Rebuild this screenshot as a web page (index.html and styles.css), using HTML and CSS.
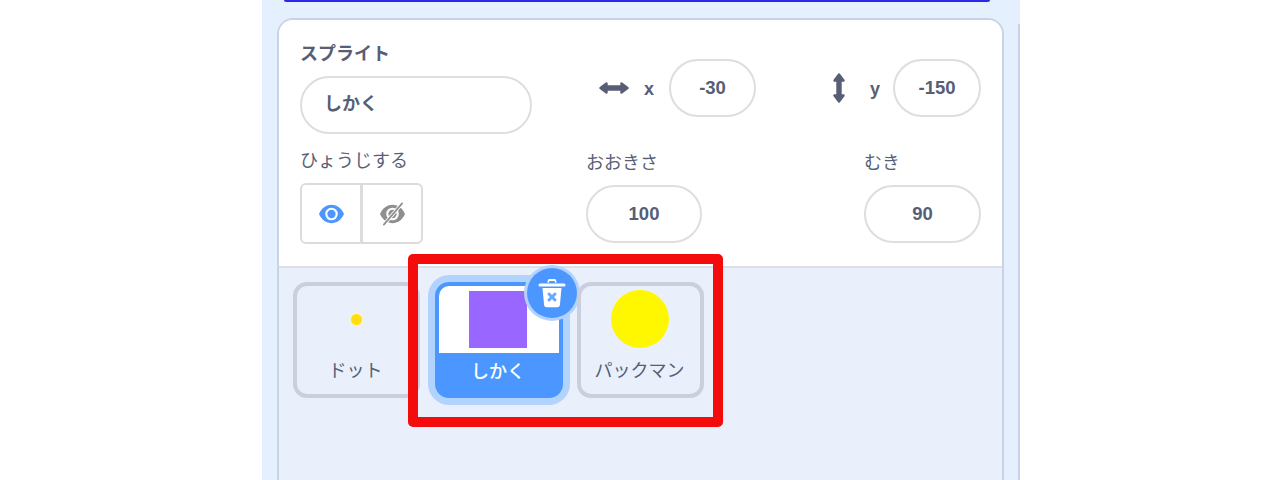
FILE: index.html
```html
<!DOCTYPE html>
<html lang="ja">
<head>
<meta charset="utf-8">
<title>スプライト</title>
<link rel="stylesheet" href="styles.css">
</head>
<body>
<div class="app">
  <div class="column">
    <div class="top-bar"></div>
    <section class="panel">
      <div class="info">
        <div class="row-top">
          <div class="name-field">
            <div class="label strong">スプライト</div>
            <div class="input name">しかく</div>
          </div>
          <div class="coord coord-x">
            <svg class="arrow-h" viewBox="0 0 30 14"><path d="M1.5 7 7.5 2.5v3h15v-3l6 4.5-6 4.5v-3h-15v3z" fill="#575e75" stroke="#575e75" stroke-width="2.4" stroke-linejoin="round"/></svg>
            <span class="axis axis-x">x</span>
            <div class="input num w87">-30</div>
          </div>
          <div class="coord coord-y">
            <svg class="arrow-v" viewBox="0 0 14 30"><path d="M7 1.5 11.5 7.5h-3v15h3L7 28.500 2.500 22.500h3v-15h-3z" fill="#575e75" stroke="#575e75" stroke-width="2.4" stroke-linejoin="round"/></svg>
            <span class="axis axis-y">y</span>
            <div class="input num w88">-150</div>
          </div>
        </div>
        <div class="row-bottom">
          <div class="field-show">
            <div class="label">ひょうじする</div>
            <div class="toggle">
              <div class="toggle-btn">
                <svg class="eye" viewBox="0 0 28 20"><path d="M1 10C4 3.500 9 .5 14 .5s10 3 13 9.500c-3 6.500-8 9.500-13 9.500S4 16.500 1 10z" fill="#4c97ff"/><circle cx="14" cy="10" r="6.500" fill="#fff"/><circle cx="14" cy="10" r="4.300" fill="#4c97ff"/></svg>
              </div>
              <div class="toggle-btn">
                <svg class="eye" viewBox="0 0 28 24"><path d="M1 12C4 5.500 9 2.500 14 2.500s10 3 13 9.500c-3 6.500-8 9.500-13 9.500S4 18.500 1 12z" fill="#8f8f8f"/><circle cx="14" cy="12" r="6.500" fill="#fff"/><circle cx="14" cy="12" r="4.300" fill="#8f8f8f"/><path d="M5 23 24 1" stroke="#fff" stroke-width="3.600"/><path d="M5 23 24 1" stroke="#8f8f8f" stroke-width="1.800" stroke-linecap="round"/></svg>
              </div>
            </div>
          </div>
          <div class="field-size">
            <div class="label">おおきさ</div>
            <div class="input num w116">100</div>
          </div>
          <div class="field-dir">
            <div class="label">むき</div>
            <div class="input num w117">90</div>
          </div>
        </div>
      </div>
      <div class="tray">
        <div class="tile">
          <div class="thumb"><span class="dot"></span></div>
          <div class="tile-name">ドット</div>
        </div>
        <div class="tile selected">
          <div class="thumb"><span class="square"></span></div>
          <div class="tile-name">しかく</div>
          <div class="delete">
            <svg class="trash" viewBox="0 0 28 30">
              <path d="M10 4 11 1.500h6L18 4" fill="none" stroke="#fff" stroke-width="1.800" stroke-linejoin="round"/>
              <path d="M2 6.500 H26" stroke="#fff" stroke-width="3" stroke-linecap="round"/>
              <path d="M4.500 9.500h19l-1.600 17a2.500 2.500 0 0 1-2.500 2.300H8.600a2.500 2.500 0 0 1-2.500-2.300z" fill="#fff"/>
              <path d="M11 15.500l6 6M17 15.500l-6 6" stroke="#6aa9ff" stroke-width="3" stroke-linecap="round"/>
            </svg>
          </div>
        </div>
        <div class="tile">
          <div class="thumb"><span class="circle"></span></div>
          <div class="tile-name">パックマン</div>
        </div>
      </div>
    </section>
  </div>
  <div class="next-panel"></div>
</div>
<div class="highlight"></div>
</body>
</html>
```

FILE: styles.css
```css
html, body {
  margin: 0;
  height: 480px;
  overflow: hidden;
  background: #fff;
}

body {
  position: relative;
  font-family: "Noto Sans CJK JP", "Liberation Sans", sans-serif;
  color: #575e75;
}

.app {
  box-sizing: border-box;
  width: 758px;
  height: 480px;
  margin-left: 262px;
  padding-left: 15px;
  display: flex;
  gap: 14px;
  background: #e5f0ff;
  overflow: hidden;
}

.column {
  width: 727px;
  flex: none;
}

.top-bar {
  height: 2px;
  margin: 0 14px 16px 7px;
  background: #2a2ae6;
  border-radius: 0 0 6px 6px;
}

.panel {
  box-sizing: border-box;
  height: 520px;
  border: 2px solid #c9d3e6;
  border-bottom: 0;
  border-radius: 16px 16px 0 0;
  background: #e9f0fc;
  overflow: hidden;
}

.next-panel {
  width: 2px;
  flex: none;
  margin-top: 24px;
  background: #c9d3e6;
}

.info {
  background: #fff;
  padding: 22px 21px 22px 21px;
  border-bottom: 2px solid #dcdfe6;
}

.label {
  height: 22px;
  font-size: 18px;
  line-height: 20px;
  white-space: nowrap;
}

.strong {
  font-weight: 700;
}

.input {
  box-sizing: border-box;
  height: 58px;
  border: 2px solid #dedede;
  border-radius: 29px;
  background: #fff;
  font-weight: 700;
  color: #575e75;
  display: flex;
  align-items: center;
}

.name {
  width: 232px;
  padding: 0 0 6px 22px;
  font-size: 18px;
}

.num {
  justify-content: center;
  font-family: "Liberation Sans", sans-serif;
  font-size: 18.500px;
}

.w87 { width: 87px; }
.w88 { width: 88px; }
.w116 { width: 116px; }
.w117 { width: 117px; }

.row-top {
  display: flex;
}

.name-field {
  display: flex;
  flex-direction: column;
  gap: 12px;
}

.coord {
  display: flex;
  align-items: center;
  height: 58px;
  margin-top: 17px;
}

.coord-x {
  margin-left: 67px;
}

.coord-y {
  margin-left: auto;
}

.arrow-h {
  width: 30px;
  height: 14px;
}

.arrow-v {
  width: 14px;
  height: 30px;
}

.axis {
  font-family: "Liberation Sans", sans-serif;
  font-weight: 700;
  font-size: 18px;
}

.axis-x {
  margin: 2px 15px 0 15px;
}

.axis-y {
  margin: 2px 13px 0 24px;
}

.row-bottom {
  display: grid;
  grid-template-columns: 286px 278px 117px;
  margin-top: 15px;
}

.field-show {
  display: flex;
  flex-direction: column;
  gap: 12px;
}

.field-size,
.field-dir {
  display: flex;
  flex-direction: column;
  gap: 12px;
  padding-top: 2px;
}

.toggle {
  box-sizing: border-box;
  width: 123px;
  height: 61px;
  display: flex;
  border: 2px solid #dcdcdc;
  border-radius: 6px;
}

.toggle-btn {
  flex: 1;
  display: flex;
  align-items: center;
  justify-content: center;
}

.toggle-btn + .toggle-btn {
  border-left: 3px solid #dcdcdc;
}

.eye {
  width: 27px;
  height: 24px;
}

.tray {
  display: flex;
  gap: 15px;
  padding: 14px;
}

.tile {
  box-sizing: border-box;
  position: relative;
  width: 127px;
  height: 116px;
  flex: none;
  border: 4px solid #c9cfdc;
  border-radius: 14px;
}

.thumb {
  height: 66px;
  display: flex;
  align-items: center;
  justify-content: center;
}

.tile-name {
  height: 36px;
  padding-right: 2px;
  font-size: 18px;
  line-height: 35px;
  text-align: center;
  white-space: nowrap;
}

.selected {
  width: 128px;
  margin-right: -1px;
  border-color: #4c97ff;
  background: #4c97ff;
  box-shadow: 0 0 0 7px #b3d3ff;
}

.selected .thumb {
  background: #fff;
  border-radius: 10px 10px 0 0;
  height: 67px;
}

.selected .tile-name {
  color: #fff;
  font-weight: 500;
  height: 41px;
  line-height: 35px;
}

.dot {
  width: 11px;
  height: 11px;
  border-radius: 50%;
  background: #ffdf14;
  box-shadow: 0 0 2px 1px #fff7b0;
}

.square {
  width: 58px;
  height: 57px;
  margin: 0 2px 0 0;
  background: #9966ff;
}

.circle {
  width: 58px;
  height: 58px;
  margin-right: 1px;
  border-radius: 50%;
  background: #fff700;
}

.delete {
  position: absolute;
  left: 88px;
  top: -18px;
  width: 50px;
  height: 50px;
  border-radius: 50%;
  background: #4c97ff;
  box-shadow: 0 0 0 3px #b3d3ff;
  display: flex;
  align-items: center;
  justify-content: center;
}

.trash {
  width: 28px;
  height: 31px;
}

.highlight {
  position: absolute;
  left: 408px;
  top: 254px;
  box-sizing: border-box;
  width: 315px;
  height: 173px;
  border: 10px solid #f40b0b;
  border-radius: 5px;
}
```
